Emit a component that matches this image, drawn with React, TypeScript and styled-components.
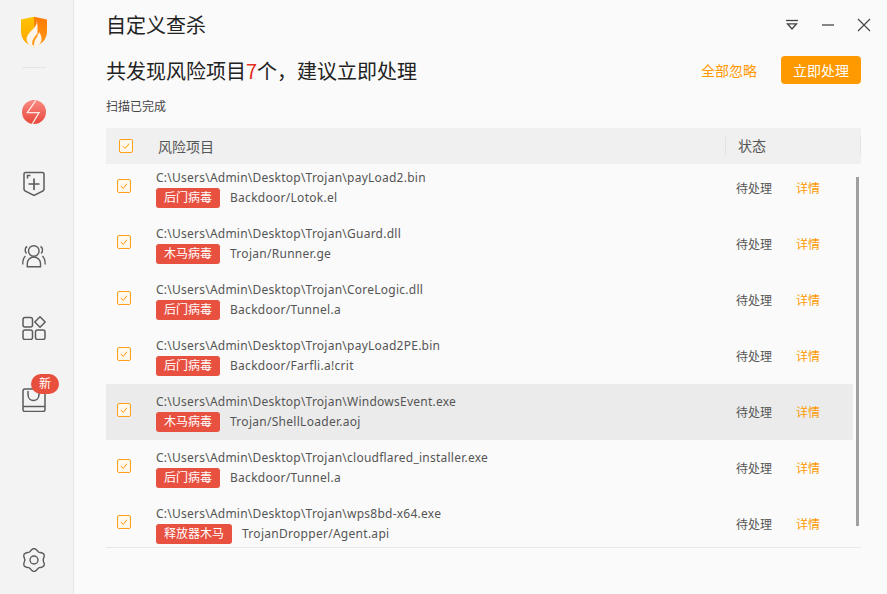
import React from "react";
import styled, { createGlobalStyle } from "styled-components";

const GlobalStyle = createGlobalStyle`
  html, body {
    margin: 0;
    padding: 0;
    background: #fafafa;
  }
  body {
    font-family: "Noto Sans", "Noto Sans CJK SC", sans-serif;
  }
`;

const Window = styled.div`
  display: flex;
  width: 887px;
  height: 594px;
  overflow: hidden;
  background: #fafafa;
`;

const Sidebar = styled.aside`
  display: flex;
  flex-direction: column;
  align-items: center;
  flex: none;
  box-sizing: border-box;
  width: 74px;
  padding: 16px 6px 22px 0;
  background: #f3f3f3;
  border-right: 1px solid #e6e6e6;
`;

const Divider = styled.div`
  width: 24px;
  height: 1px;
  margin-top: 19px;
  margin-bottom: 8px;
  background: #e4e4e4;
`;

const NavItem = styled.div`
  position: relative;
  display: flex;
  align-items: center;
  justify-content: center;
  width: 100%;
  height: 72px;
  color: #5c5c5c;
`;

const NewBadge = styled.span`
  position: absolute;
  top: 10px;
  left: 31px;
  width: 28px;
  height: 20px;
  border-radius: 10px;
  background: #e84f3d;
  color: #fff;
  font-size: 12px;
  line-height: 20px;
  text-align: center;
`;

const SettingsItem = styled.div`
  display: flex;
  margin-top: auto;
  color: #5c5c5c;
`;

const Main = styled.main`
  display: flex;
  flex-direction: column;
  flex: 1;
  min-width: 0;
  padding: 0 26px 0 32px;
`;

const TitleBar = styled.header`
  display: flex;
  align-items: center;
  justify-content: space-between;
  height: 50px;
`;

const Title = styled.h1`
  margin: 0;
  color: #222;
  font-family: "Noto Sans CJK SC", sans-serif;
  font-size: 20px;
  font-weight: 400;
  line-height: 28px;
`;

const WindowControls = styled.div`
  display: flex;
  align-items: center;
  gap: 22px;
  margin-right: -10px;
  color: #444;
`;

const Headline = styled.div`
  display: flex;
  align-items: center;
  margin-top: 6px;
  height: 28px;
`;

const Summary = styled.h2`
  flex: 1;
  margin: 0;
  padding-top: 2px;
  color: #222;
  font-family: "Noto Sans CJK SC", sans-serif;
  font-size: 20px;
  font-weight: 400;
  line-height: 28px;
`;

const Count = styled.span`
  color: #e62e1f;
`;

const GhostAction = styled.button`
  margin-right: 24px;
  padding: 0;
  border: 0;
  background: none;
  color: #ff9900;
  font: inherit;
  font-size: 14px;
`;

const PrimaryAction = styled.button`
  width: 80px;
  height: 28px;
  padding: 0;
  border: 0;
  border-radius: 4px;
  background: #ff9900;
  color: #fff;
  font: inherit;
  font-size: 14px;
`;

const ScanState = styled.div`
  margin-top: 14px;
  color: #444;
  font-family: "Noto Sans CJK SC", sans-serif;
  font-size: 12px;
  line-height: 16px;
`;

const Table = styled.section`
  position: relative;
  margin-top: 14px;
`;

const TableHead = styled.div`
  position: relative;
  z-index: 1;
  display: flex;
  align-items: center;
  height: 36px;
  background: #f0f0f0;
  color: #555;
  font-size: 14px;
`;

const HeadCheck = styled.div`
  display: flex;
  width: 52px;
  padding-left: 13px;
  box-sizing: border-box;
`;

const HeadName = styled.div`
  width: 567px;
`;

const HeadStatus = styled.div`
  flex: 1;
  align-self: center;
  height: 18px;
  padding-left: 12px;
  border-left: 1px solid #e2e2e2;
  border-right: 1px solid #e2e2e2;
  line-height: 18px;
`;

const List = styled.div`
  height: 383px;
  overflow: hidden;
  border-bottom: 1px solid #e8e8e8;
`;

const Row = styled.div<{ $active?: boolean }>`
  display: grid;
  grid-template-columns: 50px 580px 60px 1fr;
  align-items: center;
  width: 747px;
  height: 56px;
  background: ${(p) => (p.$active ? "#ebebeb" : "transparent")};

  &:first-child {
    margin-top: -4px;
  }
`;

const CheckCell = styled.div`
  display: flex;
  padding-left: 11px;
  margin-top: -4px;
`;

const Box = styled.span`
  display: flex;
  align-items: center;
  justify-content: center;
  box-sizing: border-box;
  width: 14px;
  height: 14px;
  border: 1px solid #ff9f1a;
  border-radius: 2px;
  background: #fff8ec;
  color: #ff9900;
`;

const NameCell = styled.div`
  display: flex;
  flex-direction: column;
  gap: 1px;
  margin-top: 1px;
`;

const FilePath = styled.div`
  color: #555;
  font-size: 12px;
  line-height: 18px;
  letter-spacing: 0.24px;
  white-space: nowrap;
`;

const ThreatLine = styled.div`
  display: flex;
  align-items: center;
  gap: 10px;
`;

const Tag = styled.span`
  padding: 0 8px;
  height: 20px;
  border-radius: 3px;
  background: #e8503f;
  color: #fff;
  font-size: 12px;
  line-height: 20px;
`;

const ThreatName = styled.span`
  color: #555;
  font-size: 12px;
  line-height: 20px;
  letter-spacing: 0.28px;
`;

const StatusCell = styled.div`
  color: #555;
  font-size: 12px;
`;

const DetailLink = styled.a`
  color: #ff9900;
  font-size: 12px;
`;

const ScrollThumb = styled.div`
  position: absolute;
  top: 49px;
  right: 2px;
  width: 3px;
  height: 349px;
  background: #a0a0a0;
`;

const Check = ({ size = 8 }: { size?: number }) => (
  <svg width={size} height={size} viewBox="0 0 8 8" fill="none">
    <path d="M1 4.2 3.2 6.4 7 1.8" stroke="currentColor" strokeWidth="1" />
  </svg>
);

const Logo = () => (
  <svg width="28" height="32" viewBox="0 0 28 32">
    <defs>
      <linearGradient id="logoLeft" x1="0" y1="0" x2="0" y2="1">
        <stop offset="0" stopColor="#ffc400" />
        <stop offset="1" stopColor="#ffa200" />
      </linearGradient>
      <linearGradient id="logoRight" x1="0" y1="0" x2="0" y2="1">
        <stop offset="0" stopColor="#ff7a00" />
        <stop offset="1" stopColor="#ff9a1a" />
      </linearGradient>
    </defs>
    <path d="M1 3.500 14 .8V31.500C7 28 1 24 1 15.500z" fill="url(#logoLeft)" />
    <path d="M27 3.500 14 .8V31.500c7-3.500 13-7.500 13-16z" fill="url(#logoRight)" />
    <path
      d="M16.500 4c1 4.500-1.500 7-4.500 10-3.500 3.500-6.500 7-5 11.500 1 3 4 5.500 7 6 3.500-.5 7-3.500 7.500-8 .3-3-1-5.500-2.500-7.500-.3 1.800-1 3-2 3.500 1.200-5 .5-12-.5-15.500z"
      fill="#fff4ea"
    />
    <path d="M17 18c-2.500 2.500-5 6-5 10l1.800 2c.2-4.500 1.700-7.500 3.700-9.500z" fill="#ff9a1a" />
  </svg>
);

const Bolt = () => (
  <svg width="24" height="24" viewBox="0 0 24 24">
    <defs>
      <linearGradient id="boltFill" x1="0" y1="0" x2="0" y2="1">
        <stop offset="0" stopColor="#f98a84" />
        <stop offset="1" stopColor="#e8463a" />
      </linearGradient>
    </defs>
    <circle cx="12" cy="12" r="12" fill="url(#boltFill)" />
    <path d="M13.700 .7 5.300 12.700H17L10.300 24" fill="none" stroke="#ffe9e6" strokeWidth="1.300" />
  </svg>
);

const ShieldPlus = () => (
  <svg width="24" height="26" viewBox="0 0 24 26" fill="none" stroke="currentColor" strokeWidth="1.500">
    <path d="M3.500 1.500h17A1.500 1.500 0 0 1 22 3v15.500L21 20l-9 4.500L3 20l-1-1.500V3a1.500 1.500 0 0 1 1.500-1.500z" />
    <path d="M12 7.500v11.500M6.500 13h11" strokeWidth="1.700" />
    <path d="M5.500 7.500V4.500H8.500" />
  </svg>
);

const Users = () => (
  <svg width="24" height="24" viewBox="0 0 24 24" fill="none" stroke="currentColor" strokeWidth="1.400">
    <circle cx="11.800" cy="7" r="5.300" />
    <path d="M5.300 22.800v-3.300c0-3.500 2.700-6.500 6.500-6.500s6.700 3 6.700 6.500v3.300z" />
    <path d="M5.200 2.500C3 3.500 2.300 7 4.500 9.500M18.500 2.500c2.200 1 2.900 4.500.7 7" />
    <path d="M3.500 12C1.500 13.500.7 16 .7 20.500M20.300 12c2 1.500 2.900 4 2.900 8.500" />
  </svg>
);

const Apps = () => (
  <svg width="24" height="24" viewBox="0 0 24 24" fill="none" stroke="currentColor" strokeWidth="1.500">
    <rect x="1" y="1.500" width="9.500" height="9.500" rx="2" />
    <rect x="1" y="14" width="9.500" height="9.500" rx="2" />
    <rect x="13.500" y="14" width="9.500" height="9.500" rx="2" />
    <path d="M18 .8 23.200 6 18 11.200 12.800 6z" strokeLinejoin="round" />
  </svg>
);

const Book = () => (
  <svg width="24" height="24" viewBox="0 0 24 24" fill="none" stroke="currentColor" strokeWidth="1.500">
    <rect x="1" y="1" width="22" height="22.500" rx="2" />
    <path d="M1 18.500h22" />
    <path d="M6 3v3.500c0 8 11 8 11 0V3" />
  </svg>
);

// scalloped outline, six lobes
const gearPath = Array.from({ length: 72 }, (_, i) => {
  const a = (i / 72) * Math.PI * 2;
  const r = 10.3 + 1.1 * Math.cos(6 * a);
  return `${(12 + r * Math.sin(a)).toFixed(2)} ${(12 - r * Math.cos(a)).toFixed(2)}`;
}).join("L");

const Gear = () => (
  <svg width="24" height="24" viewBox="0 0 24 24" fill="none" stroke="currentColor" strokeWidth="1.400">
    <circle cx="12" cy="12" r="4" />
    <path d={`M${gearPath}z`} strokeLinejoin="round" />
  </svg>
);

const MenuGlyph = () => (
  <svg width="14" height="12" viewBox="0 0 14 12" fill="none" stroke="currentColor" strokeWidth="1.300">
    <path d="M1 1.500h12" />
    <path d="M2.500 4.800h9L7 10z" />
  </svg>
);

const MinGlyph = () => (
  <svg width="14" height="12" viewBox="0 0 14 12" fill="none" stroke="currentColor" strokeWidth="1.300">
    <path d="M1 6h12" />
  </svg>
);

const CloseGlyph = () => (
  <svg width="14" height="14" viewBox="0 0 14 14" fill="none" stroke="currentColor" strokeWidth="1.200">
    <path d="M1 1l12 12M13 1 1 13" />
  </svg>
);

const rows = [
  { path: "C:\\Users\\Admin\\Desktop\\Trojan\\payLoad2.bin", tag: "后门病毒", name: "Backdoor/Lotok.el" },
  { path: "C:\\Users\\Admin\\Desktop\\Trojan\\Guard.dll", tag: "木马病毒", name: "Trojan/Runner.ge" },
  { path: "C:\\Users\\Admin\\Desktop\\Trojan\\CoreLogic.dll", tag: "后门病毒", name: "Backdoor/Tunnel.a" },
  { path: "C:\\Users\\Admin\\Desktop\\Trojan\\payLoad2PE.bin", tag: "后门病毒", name: "Backdoor/Farfli.a!crit" },
  { path: "C:\\Users\\Admin\\Desktop\\Trojan\\WindowsEvent.exe", tag: "木马病毒", name: "Trojan/ShellLoader.aoj", active: true },
  { path: "C:\\Users\\Admin\\Desktop\\Trojan\\cloudflared_installer.exe", tag: "后门病毒", name: "Backdoor/Tunnel.a" },
  { path: "C:\\Users\\Admin\\Desktop\\Trojan\\wps8bd-x64.exe", tag: "释放器木马", name: "TrojanDropper/Agent.api" },
];

export default function App() {
  return (
    <Window>
      <GlobalStyle />
      <Sidebar>
        <Logo />
        <Divider />
        <NavItem><Bolt /></NavItem>
        <NavItem><ShieldPlus /></NavItem>
        <NavItem><Users /></NavItem>
        <NavItem><Apps /></NavItem>
        <NavItem>
          <Book />
          <NewBadge>新</NewBadge>
        </NavItem>
        <SettingsItem><Gear /></SettingsItem>
      </Sidebar>
      <Main>
        <TitleBar>
          <Title>自定义查杀</Title>
          <WindowControls>
            <MenuGlyph />
            <MinGlyph />
            <CloseGlyph />
          </WindowControls>
        </TitleBar>
        <Headline>
          <Summary>
            共发现风险项目<Count>7</Count>个，建议立即处理
          </Summary>
          <GhostAction>全部忽略</GhostAction>
          <PrimaryAction>立即处理</PrimaryAction>
        </Headline>
        <ScanState>扫描已完成</ScanState>
        <Table>
          <TableHead>
            <HeadCheck>
              <Box><Check /></Box>
            </HeadCheck>
            <HeadName>风险项目</HeadName>
            <HeadStatus>状态</HeadStatus>
          </TableHead>
          <List>
            {rows.map((row) => (
              <Row key={row.path} $active={row.active}>
                <CheckCell>
                  <Box><Check /></Box>
                </CheckCell>
                <NameCell>
                  <FilePath>{row.path}</FilePath>
                  <ThreatLine>
                    <Tag>{row.tag}</Tag>
                    <ThreatName>{row.name}</ThreatName>
                  </ThreatLine>
                </NameCell>
                <StatusCell>待处理</StatusCell>
                <DetailLink>详情</DetailLink>
              </Row>
            ))}
          </List>
          <ScrollThumb />
        </Table>
      </Main>
    </Window>
  );
}
